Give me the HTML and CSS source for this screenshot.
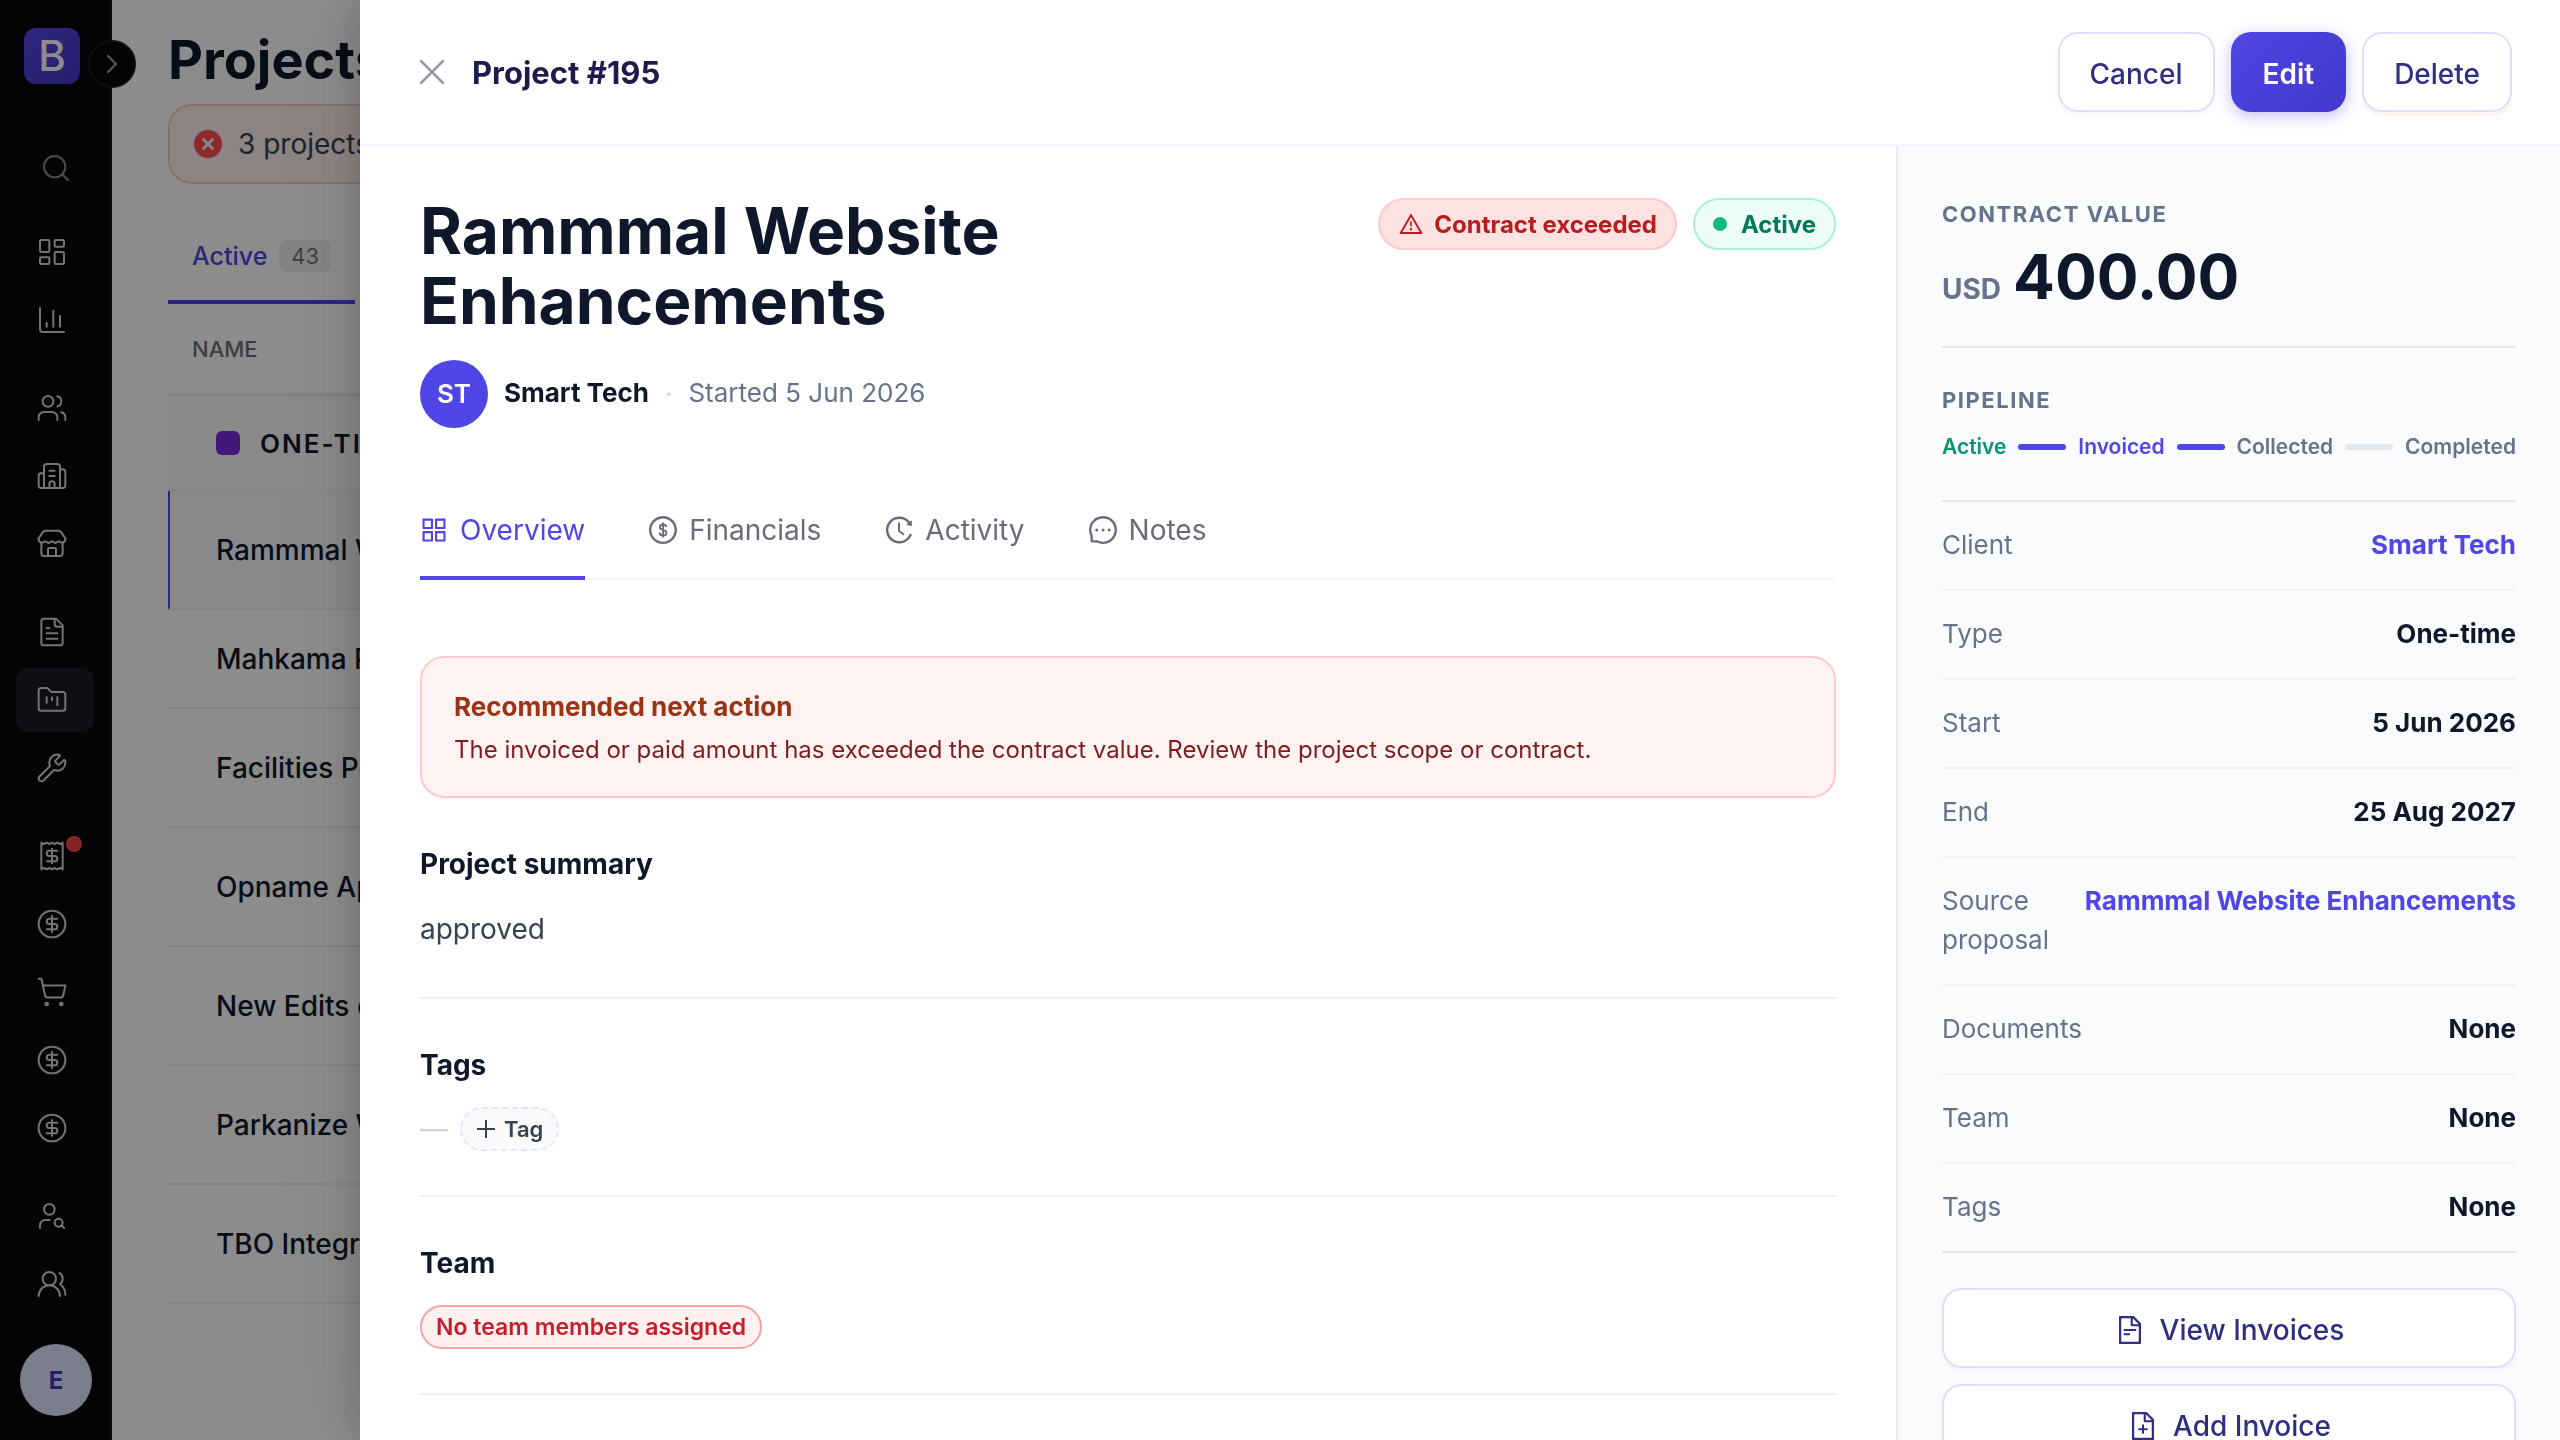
FILE: index.html
```html
<!DOCTYPE html>
<html lang="en">
<head>
    <meta charset="UTF-8">
    <meta name="viewport" content="width=device-width, initial-scale=1.0">
    <title>Project #195</title>
    <link rel="stylesheet" href="styles.css">
</head>
<body>
    <!-- shared icons -->
    <svg class="sprite" aria-hidden="true">
        <symbol id="i-dollar" viewBox="0 0 24 24">
            <circle cx="12" cy="12" r="10"/>
            <path d="M16 8h-6a2 2 0 1 0 0 4h4a2 2 0 1 1 0 4H8M12 18V6"/>
        </symbol>
    </svg>

    <div class="app">
        <aside class="sidebar">
            <a class="logo" href="#">B</a>
            <button class="toggle" aria-label="Expand menu">
                <svg viewBox="0 0 24 24"><path d="m9 18 6-6-6-6"/></svg>
            </button>
            <button class="nav-search" aria-label="Search">
                <svg viewBox="0 0 24 24"><circle cx="11" cy="11" r="8"/><path d="m21 21-4.3-4.3"/></svg>
            </button>
            <nav class="nav">
                <div class="nav-group">
                    <a href="#" aria-label="Dashboard"><svg viewBox="0 0 24 24"><rect x="3" y="3" width="7" height="9" rx="1"/><rect x="14" y="3" width="7" height="5" rx="1"/><rect x="14" y="12" width="7" height="9" rx="1"/><rect x="3" y="16" width="7" height="5" rx="1"/></svg></a>
                    <a href="#" aria-label="Reports"><svg viewBox="0 0 24 24"><path d="M3 3v16a2 2 0 0 0 2 2h16M18 17V9M13 17V5M8 17v-3"/></svg></a>
                </div>
                <div class="nav-group">
                    <a href="#" aria-label="Clients"><svg viewBox="0 0 24 24"><path d="M16 21v-2a4 4 0 0 0-4-4H6a4 4 0 0 0-4 4v2M16 3.128a4 4 0 0 1 0 7.744M22 21v-2a4 4 0 0 0-3-3.87"/><circle cx="9" cy="7" r="4"/></svg></a>
                    <a href="#" aria-label="Companies"><svg viewBox="0 0 24 24"><path d="M10 12h4M10 8h4M14 21v-3a2 2 0 0 0-4 0v3M6 10H4a2 2 0 0 0-2 2v7a2 2 0 0 0 2 2h16a2 2 0 0 0 2-2V9a2 2 0 0 0-2-2h-2M6 21V5a2 2 0 0 1 2-2h8a2 2 0 0 1 2 2v16"/></svg></a>
                    <a href="#" aria-label="Vendors"><svg viewBox="0 0 24 24"><path d="M15 21v-5a1 1 0 0 0-1-1h-4a1 1 0 0 0-1 1v5M17.774 10.31a1.12 1.12 0 0 0-1.549 0 2.5 2.5 0 0 1-3.451 0 1.12 1.12 0 0 0-1.548 0 2.5 2.5 0 0 1-3.452 0 1.12 1.12 0 0 0-1.549 0 2.5 2.5 0 0 1-3.77-3.248l2.889-4.184A2 2 0 0 1 7 2h10a2 2 0 0 1 1.653.873l2.895 4.192a2.5 2.5 0 0 1-3.774 3.244M4 10.95V19a2 2 0 0 0 2 2h12a2 2 0 0 0 2-2v-8.05"/></svg></a>
                </div>
                <div class="nav-group">
                    <a href="#" aria-label="Proposals"><svg viewBox="0 0 24 24"><path d="M15 2H6a2 2 0 0 0-2 2v16a2 2 0 0 0 2 2h12a2 2 0 0 0 2-2V7ZM14 2v4a2 2 0 0 0 2 2h4M10 9H8M16 13H8M16 17H8"/></svg></a>
                    <a href="#" class="active" aria-label="Projects"><svg viewBox="0 0 24 24"><path d="M4 20h16a2 2 0 0 0 2-2V8a2 2 0 0 0-2-2h-7.93a2 2 0 0 1-1.66-.9l-.82-1.2A2 2 0 0 0 7.93 3H4a2 2 0 0 0-2 2v13c0 1.1.9 2 2 2ZM8 10v4M12 10v2M16 10v6"/></svg></a>
                    <a href="#" aria-label="Services"><svg viewBox="0 0 24 24"><path d="M14.7 6.3a1 1 0 0 0 0 1.4l1.6 1.6a1 1 0 0 0 1.4 0l3.106-3.105c.32-.322.863-.22.983.218a6 6 0 0 1-8.259 7.057l-7.91 7.91a1 1 0 0 1-2.999-3l7.91-7.91a6 6 0 0 1 7.057-8.259c.438.12.54.662.219.984z"/></svg></a>
                </div>
                <div class="nav-group">
                    <a href="#" class="has-dot" aria-label="Invoices"><svg viewBox="0 0 24 24"><path d="M4 2v20l2-1 2 1 2-1 2 1 2-1 2 1 2-1 2 1V2l-2 1-2-1-2 1-2-1-2 1-2-1-2 1ZM16 8h-6a2 2 0 1 0 0 4h4a2 2 0 1 1 0 4H8M12 17.500v-11"/></svg></a>
                    <a href="#" aria-label="Payments"><svg><use href="#i-dollar"/></svg></a>
                    <a href="#" aria-label="Purchases"><svg viewBox="0 0 24 24"><circle cx="8" cy="21" r="1"/><circle cx="19" cy="21" r="1"/><path d="M2.050 2.050h2l2.660 12.420a2 2 0 0 0 2 1.580h9.780a2 2 0 0 0 1.950-1.570l1.650-7.430H5.120"/></svg></a>
                    <a href="#" aria-label="Expenses"><svg><use href="#i-dollar"/></svg></a>
                    <a href="#" aria-label="Payroll"><svg><use href="#i-dollar"/></svg></a>
                </div>
                <div class="nav-group">
                    <a href="#" aria-label="Recruiting"><svg viewBox="0 0 24 24"><circle cx="10" cy="7" r="4"/><path d="M10.300 15H7a4 4 0 0 0-4 4v2"/><circle cx="17" cy="17" r="3"/><path d="m21 21-1.900-1.900"/></svg></a>
                    <a href="#" aria-label="Employees"><svg viewBox="0 0 24 24"><path d="M18 21a8 8 0 0 0-16 0"/><circle cx="10" cy="8" r="5"/><path d="M22 20c0-3.370-2-6.500-4-8a5 5 0 0 0-.45-8.300"/></svg></a>
                </div>
            </nav>
            <button class="user">E</button>
        </aside>

        <main class="projects">
            <h1>Projects</h1>
            <div class="banner">
                <svg viewBox="0 0 28 28"><circle cx="14" cy="14" r="14" fill="#ff4d55"/><path d="m9.500 9.500 9 9m0-9-9 9" stroke="#fff" stroke-width="2.500" stroke-linecap="round"/></svg>
                <span>3 projects exceeded their contract value</span>
            </div>
            <div class="list-tabs">
                <button class="list-tab">Active <span class="count">43</span></button>
            </div>
            <table class="list">
                <thead>
                    <tr><th>NAME</th></tr>
                </thead>
                <tbody>
                    <tr class="group"><td><div class="group-name"><span class="swatch"></span>ONE-TIME</div></td></tr>
                    <tr class="selected"><td>Rammmal Website Enhancements</td></tr>
                    <tr class="short"><td>Mahkama Portal</td></tr>
                    <tr><td>Facilities Portal</td></tr>
                    <tr><td>Opname App</td></tr>
                    <tr><td>New Edits on Website</td></tr>
                    <tr><td>Parkanize Website</td></tr>
                    <tr><td>TBO Integration</td></tr>
                </tbody>
            </table>
        </main>
    </div>

    <div class="backdrop"></div>

    <section class="drawer" role="dialog" aria-label="Project #195">
        <header class="drawer-head">
            <button class="close" aria-label="Close">
                <svg viewBox="0 0 24 24"><path d="M1 1l22 22M23 1 1 23"/></svg>
            </button>
            <h2>Project #195</h2>
            <div class="actions">
                <button class="btn">Cancel</button>
                <button class="btn primary">Edit</button>
                <button class="btn danger">Delete</button>
            </div>
        </header>

        <div class="drawer-body">
            <div class="details">
                <div class="title-row">
                    <h1>Rammmal Website Enhancements</h1>
                    <div class="badges">
                        <span class="badge red">
                            <svg viewBox="0 0 1024 1024"><path d="M464 720a48 48 0 1096 0 48 48 0 10-96 0zm16-304v184c0 4.400 3.600 8 8 8h48c4.400 0 8-3.600 8-8V416c0-4.400-3.600-8-8-8h-48c-4.400 0-8 3.600-8 8zm475.700 440l-416-720c-6.200-10.700-16.900-16-27.700-16s-21.600 5.300-27.700 16l-416 720C56 877.400 71.400 904 96 904h832c24.600 0 40-26.600 27.700-48zm-783.500-27.900L512 239.900l339.800 588.200H172.200z"/></svg>
                            Contract exceeded
                        </span>
                        <span class="badge green"><i class="dot"></i>Active</span>
                    </div>
                </div>
                <div class="client-row">
                    <span class="avatar">ST</span>
                    <strong>Smart Tech</strong>
                    <span class="sep">·</span>
                    <span class="started">Started 5 Jun 2026</span>
                </div>

                <div class="tabs" role="tablist">
                    <button class="tab current" role="tab">
                        <svg viewBox="0 0 1024 1024"><path d="M464 144H160c-8.800 0-16 7.200-16 16v304c0 8.800 7.200 16 16 16h304c8.800 0 16-7.200 16-16V160c0-8.800-7.200-16-16-16zm-52 268H212V212h200v200zm452-268H560c-8.800 0-16 7.200-16 16v304c0 8.800 7.200 16 16 16h304c8.800 0 16-7.200 16-16V160c0-8.800-7.200-16-16-16zm-52 268H612V212h200v200zM464 544H160c-8.800 0-16 7.200-16 16v304c0 8.800 7.200 16 16 16h304c8.800 0 16-7.200 16-16V560c0-8.800-7.200-16-16-16zm-52 268H212V612h200v200zm452-268H560c-8.800 0-16 7.200-16 16v304c0 8.800 7.200 16 16 16h304c8.800 0 16-7.200 16-16V560c0-8.800-7.200-16-16-16zm-52 268H612V612h200v200z"/></svg>
                        Overview
                    </button>
                    <button class="tab" role="tab">
                        <svg viewBox="0 0 1024 1024"><path d="M512 64C264.600 64 64 264.600 64 512s200.600 448 448 448 448-200.600 448-448S759.400 64 512 64zm0 820c-205.400 0-372-166.600-372-372s166.600-372 372-372 372 166.600 372 372-166.600 372-372 372z"/><path d="M620 420c-6-54-48-84-106-84-64 0-106 34-106 84 0 116 216 60 216 180 0 54-46 88-110 88-66 0-108-34-114-90M514 272v480" fill="none" stroke="currentColor" stroke-width="58"/></svg>
                        Financials
                    </button>
                    <button class="tab" role="tab">
                        <svg viewBox="0 0 1024 1024"><path d="M536.100 273H488c-4.400 0-8 3.600-8 8v275.300c0 2.600 1.200 5 3.300 6.500l165.300 120.700c3.600 2.600 8.600 1.900 11.200-1.700l28.600-39c2.700-3.700 1.900-8.700-1.700-11.200L544.100 528.500V281c0-4.400-3.600-8-8-8zm219.800 75.200l156.800 38.300c5 1.200 9.900-2.600 9.900-7.700l.8-161.500c0-6.700-7.700-10.500-12.900-6.300L752.900 334.100a8 8 0 003 14.100zm167.700 301.100l-56.700-19.500a8 8 0 00-10.100 4.800c-1.900 5.100-3.900 10.100-6 15.100-17.800 42.100-43.300 80-75.900 112.500a353 353 0 01-112.500 75.900 352.180 352.180 0 01-137.700 27.800c-47.800 0-94.100-9.300-137.700-27.800a353 353 0 01-112.500-75.900c-32.500-32.500-58-70.400-75.900-112.500A353.440 353.440 0 01171 512c0-47.800 9.300-94.200 27.800-137.800 17.800-42.100 43.300-80 75.900-112.500a353 353 0 01112.500-75.900C430.600 167.300 477 158 524.800 158s94.100 9.300 137.700 27.800A353 353 0 01775 261.700c10.200 10.300 19.800 21 28.600 32.300l59.800-46.800C784.700 146.600 662.200 81.900 524.600 82 285 82.100 92.600 276.700 95 516.400 97.400 751.900 288.900 942 524.800 942c185.500 0 343.500-117.600 403.700-282.300 1.500-4.200-.7-8.900-4.900-10.400z"/></svg>
                        Activity
                    </button>
                    <button class="tab" role="tab">
                        <svg viewBox="0 0 1024 1024"><path d="M464 512a48 48 0 1096 0 48 48 0 10-96 0zm200 0a48 48 0 1096 0 48 48 0 10-96 0zm-400 0a48 48 0 1096 0 48 48 0 10-96 0zm661.200-173.600c-22.600-53.700-55-101.900-96.300-143.300a444.350 444.350 0 00-143.300-96.300C630.600 75.700 572.200 64 512 64h-2c-60.600.3-119.300 12.300-174.500 35.900a445.350 445.350 0 00-142 96.500c-40.900 41.300-73 89.300-95.200 142.800-23 55.400-34.600 114.300-34.300 174.900A449.400 449.400 0 00112 714v152a46 46 0 0046 46h152.100A449.400 449.400 0 00510 960h2.100c59.900 0 118-11.600 172.700-34.300a444.480 444.480 0 00142.800-95.200c41.300-40.900 73.800-88.700 96.500-142 23.600-55.200 35.600-113.900 35.900-174.500.3-60.900-11.500-120-34.800-175.600zm-151.100 438C704 845.800 611 884 512 884h-1.700c-60.300-.3-120.200-15.300-173.100-43.500l-8.400-4.500H188V695.200l-4.500-8.400C155.300 633.900 140.300 574 140 513.700c-.4-99.700 37.700-193.300 107.600-263.800 69.800-70.500 163.100-109.500 262.800-109.900h1.700c50 0 98.500 9.700 144.200 28.900 44.600 18.700 84.600 45.600 119 80 34.300 34.300 61.300 74.400 80 119 19.400 46.200 29.100 95.200 28.900 145.800-.6 99.600-39.700 192.900-110.100 262.700z"/></svg>
                        Notes
                    </button>
                </div>

                <div class="next-action">
                    <h3>Recommended next action</h3>
                    <p>The invoiced or paid amount has exceeded the contract value. Review the project scope or contract.</p>
                </div>

                <section class="block">
                    <h3>Project summary</h3>
                    <p>approved</p>
                </section>
                <section class="block">
                    <h3>Tags</h3>
                    <div class="tag-row">
                        <span class="empty">—</span>
                        <button class="add-tag">
                            <svg viewBox="0 0 20 20"><path d="M10 1v18M1 10h18"/></svg>
                            Tag
                        </button>
                    </div>
                </section>
                <section class="block">
                    <h3>Team</h3>
                    <div class="tag-row"><span class="no-team">No team members assigned</span></div>
                </section>
            </div>

            <aside class="facts">
                <div class="value-box">
                    <h4>CONTRACT VALUE</h4>
                    <p class="amount"><span>USD</span> 400.00</p>
                </div>
                <div class="pipeline-box">
                    <h4>PIPELINE</h4>
                    <div class="pipeline">
                        <span class="done">Active</span>
                        <i class="bar on"></i>
                        <span class="now">Invoiced</span>
                        <i class="bar on"></i>
                        <span>Collected</span>
                        <i class="bar"></i>
                        <span>Completed</span>
                    </div>
                </div>
                <dl class="rows">
                    <div><dt>Client</dt><dd><a href="#">Smart Tech</a></dd></div>
                    <div><dt>Type</dt><dd>One-time</dd></div>
                    <div><dt>Start</dt><dd>5 Jun 2026</dd></div>
                    <div><dt>End</dt><dd>25 Aug 2027</dd></div>
                    <div><dt>Source proposal</dt><dd><a href="#">Rammmal Website Enhancements</a></dd></div>
                    <div><dt>Documents</dt><dd>None</dd></div>
                    <div><dt>Team</dt><dd>None</dd></div>
                    <div><dt>Tags</dt><dd>None</dd></div>
                </dl>
                <div class="fact-actions">
                    <button class="btn">
                        <svg viewBox="0 0 1024 1024"><path d="M854.600 288.600L639.400 73.400c-6-6-14.100-9.400-22.600-9.400H192c-17.700 0-32 14.300-32 32v832c0 17.700 14.300 32 32 32h640c17.700 0 32-14.300 32-32V311.300c0-8.500-3.400-16.700-9.400-22.700zM790.200 326H602V137.800L790.200 326zm1.800 562H232V136h302v216a42 42 0 0042 42h216v494zM504 618H320c-4.400 0-8 3.600-8 8v48c0 4.400 3.600 8 8 8h184c4.400 0 8-3.600 8-8v-48c0-4.400-3.600-8-8-8zM312 490v48c0 4.400 3.600 8 8 8h384c4.400 0 8-3.600 8-8v-48c0-4.400-3.600-8-8-8H320c-4.400 0-8 3.600-8 8z"/></svg>
                        View Invoices
                    </button>
                    <button class="btn">
                        <svg viewBox="0 0 1024 1024"><path d="M854.600 288.600L639.400 73.400c-6-6-14.100-9.400-22.600-9.400H192c-17.700 0-32 14.300-32 32v832c0 17.700 14.300 32 32 32h640c17.700 0 32-14.300 32-32V311.300c0-8.500-3.400-16.700-9.400-22.700zM790.200 326H602V137.800L790.200 326zm1.800 562H232V136h302v216a42 42 0 0042 42h216v494zM544 472c0-4.400-3.600-8-8-8h-48c-4.400 0-8 3.600-8 8v108H372c-4.400 0-8 3.600-8 8v48c0 4.400 3.600 8 8 8h108v108c0 4.400 3.600 8 8 8h48c4.400 0 8-3.600 8-8V644h108c4.400 0 8-3.600 8-8v-48c0-4.400-3.600-8-8-8H544V472z"/></svg>
                        Add Invoice
                    </button>
                </div>
            </aside>
        </div>
    </section>
</body>
</html>
```
FILE: styles.css
```css
*{
    margin: 0;
    padding: 0;
    box-sizing: border-box;
}
body{
    font-family: Inter, "Liberation Sans", sans-serif;
    font-size: 26px;
    color: #0f172a;
    background: #fff;
    overflow: hidden;
}
button{
    font: inherit;
    color: inherit;
    background: none;
    border: 0;
    cursor: pointer;
}
a{
    text-decoration: none;
}
.sprite{
    display: none;
}
.app{
    display: flex;
    height: 100vh;
}

/* sidebar */
.sidebar{
    position: relative;
    flex: none;
    display: flex;
    flex-direction: column;
    width: 112px;
    padding: 28px 16px 24px;
    background: #08080c;
    border-right: 2px solid #15151c;
}
.sidebar svg{
    width: 32px;
    height: 32px;
    fill: none;
    stroke: currentColor;
    stroke-width: 1.5;
    stroke-linecap: round;
    stroke-linejoin: round;
}
.logo{
    width: 56px;
    height: 56px;
    margin-left: 8px;
    border-radius: 12px;
    background: linear-gradient(135deg, #5b45e6, #4338ca);
    color: #fff;
    font-size: 42px;
    font-weight: 500;
    line-height: 56px;
    text-align: center;
}
.toggle{
    position: absolute;
    top: 40px;
    right: -26px;
    display: flex;
    align-items: center;
    justify-content: center;
    width: 48px;
    height: 48px;
    border: 2px solid #1c1c22;
    border-radius: 50%;
    background: #08080c;
    color: #a1a1aa;
}
.nav-search{
    align-self: flex-end;
    height: 32px;
    margin: 68px 22px 0 0;
    color: #8a8a94;
}
.nav{
    display: flex;
    flex-direction: column;
    gap: 24px;
    margin-top: 36px;
}
.nav-group{
    display: flex;
    flex-direction: column;
    gap: 4px;
}
.nav a{
    position: relative;
    display: flex;
    align-items: center;
    height: 64px;
    padding-left: 20px;
    border-radius: 12px;
    color: #d4d4d8;
}
.nav a.active{
    background: #1b1a24;
}
.has-dot::after{
    content: "";
    position: absolute;
    top: 12px;
    right: 12px;
    width: 16px;
    height: 16px;
    border-radius: 50%;
    background: #ef4444;
}
.user{
    width: 72px;
    height: 72px;
    margin: auto 0 0 4px;
    border-radius: 50%;
    background: #e0e7ff;
    color: #4338ca;
    font-size: 24px;
    font-weight: 700;
}

/* project list behind the drawer */
.projects{
    flex: 1;
    min-width: 0;
    padding: 24px 56px;
}
.projects h1{
    font-size: 54px;
    line-height: 72px;
    font-weight: 700;
}
.banner{
    display: flex;
    align-items: center;
    gap: 16px;
    height: 80px;
    margin-top: 8px;
    padding: 0 24px;
    border: 2px solid #fecaca;
    border-radius: 24px;
    background: linear-gradient(90deg, #fff1ee, #fef2f2);
    color: #374151;
    font-size: 28px;
}
.banner svg{
    width: 28px;
    height: 28px;
}
.list-tabs{
    display: flex;
    margin-top: 32px;
}
.list-tab{
    display: flex;
    align-items: center;
    gap: 12px;
    height: 88px;
    padding: 0 24px 4px;
    border-bottom: 4px solid #4f46e5;
    border-radius: 4px 4px 0 0;
    color: #4f46e5;
    font-size: 25px;
    font-weight: 500;
}
.count{
    padding: 0 12px;
    border-radius: 8px;
    background: #f1f1f4;
    color: #71717a;
    font-size: 22px;
    font-weight: 400;
    line-height: 32px;
}
.list{
    width: 100%;
    border-collapse: separate;
    border-spacing: 0;
    text-align: left;
}
.list th{
    height: 93px;
    padding: 0 24px;
    border-bottom: 4px solid #ededf0;
    color: #71717a;
    font-size: 22px;
    font-weight: 500;
}
.list td{
    height: 119px;
    padding: 0 48px;
    border-bottom: 2px solid #f1f1f4;
    font-size: 28px;
    font-weight: 500;
}
.list .group td{
    height: 94px;
    background: #fcfcfc;
    font-size: 26px;
    font-weight: 600;
    letter-spacing: 2px;
}
.list .short td{
    height: 99px;
}
.list .selected td{
    background: #fafaff;
    border-left: 2px solid #4f46e5;
    padding-left: 46px;
}
.group-name{
    display: flex;
    align-items: center;
    gap: 20px;
}
.swatch{
    width: 24px;
    height: 24px;
    border-radius: 6px;
    background: #7c2ddb;
}

.backdrop{
    position: fixed;
    inset: 0;
    background: rgba(0, 0, 0, 0.45);
}

/* drawer */
.drawer{
    position: fixed;
    inset: 0 0 0 360px;
    display: flex;
    flex-direction: column;
    background: #fff;
    box-shadow: -12px 0 32px rgba(0, 0, 0, 0.12), -12px 0 96px rgba(0, 0, 0, 0.08);
}
.drawer-head{
    flex: none;
    display: flex;
    align-items: center;
    height: 146px;
    padding: 0 48px 0 60px;
    border-bottom: 2px solid #f3f2fe;
}
.close{
    display: flex;
    margin-right: 28px;
}
.close svg{
    width: 24px;
    height: 24px;
    stroke: #9a9aa8;
    stroke-width: 2.5;
    stroke-linecap: round;
}
.drawer-head h2{
    flex: 1;
    color: #1e1b4b;
    font-size: 31px;
    font-weight: 700;
}
.actions{
    display: flex;
    gap: 16px;
}
.btn{
    display: flex;
    align-items: center;
    justify-content: center;
    gap: 14px;
    height: 80px;
    padding: 4px 30px 0;
    border: 2px solid #e0dffa;
    border-radius: 20px;
    background: #fff;
    box-shadow: 0 4px 4px rgba(79, 70, 229, 0.04);
    color: #312e81;
    font-size: 28px;
    font-weight: 500;
}
.btn svg{
    width: 32px;
    height: 32px;
    fill: currentColor;
}
.btn.primary{
    border-color: transparent;
    background: linear-gradient(135deg, #4f46e5, #4338ca) border-box;
    box-shadow: 0 4px 16px rgba(79, 70, 229, 0.35);
    color: #fff;
    font-weight: 600;
}
.btn.danger{
    box-shadow: 0 4px 0 rgba(255, 38, 5, 0.06);
}
.drawer-body{
    flex: 1;
    min-height: 0;
    display: flex;
}
.details{
    flex: 1;
    min-width: 0;
    padding: 50px 60px 0;
    overflow: hidden;
}
.title-row{
    display: flex;
    justify-content: space-between;
    align-items: flex-start;
}
.title-row h1{
    max-width: 720px;
    font-size: 64px;
    line-height: 70px;
    font-weight: 700;
}
.badges{
    display: flex;
    gap: 16px;
    padding-top: 2px;
}
.badge{
    display: flex;
    align-items: center;
    height: 52px;
    padding: 0 18px;
    border: 2px solid;
    border-radius: 26px;
    font-size: 24px;
    font-weight: 700;
}
.badge.red{
    gap: 10px;
    background: #fee2e2;
    border-color: #fecaca;
    color: #b91c1c;
}
.badge.red svg{
    width: 26px;
    height: 26px;
    fill: currentColor;
}
.badge.green{
    gap: 14px;
    background: #ecfdf5;
    border-color: #a7f3d0;
    color: #047857;
}
.dot{
    width: 14px;
    height: 14px;
    border-radius: 50%;
    background: #10b981;
}
.client-row{
    display: flex;
    align-items: center;
    gap: 16px;
    margin-top: 24px;
    line-height: 32px;
}
.client-row strong,
.started{
    padding-bottom: 3px;
}
.client-row strong{
    font-weight: 700;
}
.avatar{
    width: 68px;
    height: 68px;
    border-radius: 50%;
    background: #4f46e5;
    color: #fff;
    font-weight: 600;
    line-height: 68px;
    text-align: center;
}
.sep{
    color: #cbd5e1;
}
.started{
    color: #64748b;
}
.tabs{
    display: flex;
    gap: 64px;
    height: 100px;
    margin: 52px 0 76px;
    border-bottom: 2px solid #f5f5fd;
}
.tab{
    display: flex;
    align-items: center;
    gap: 10px;
    height: 100px;
    padding-top: 4px;
    border-bottom: 4px solid transparent;
    color: #6b6b7b;
    font-size: 28px;
}
.tab svg{
    width: 32px;
    height: 32px;
    margin-left: -2px;
    fill: currentColor;
}
.tab.current{
    border-color: #4f46e5;
    color: #4f46e5;
}
.next-action{
    padding: 28px 32px 26px;
    border: 2px solid #fecaca;
    border-radius: 24px;
    background: #fef2f2;
    color: #7f1d1d;
    font-size: 24px;
    line-height: 40px;
}
.next-action h3{
    margin-bottom: 2px;
    color: #9a3412;
    font-size: 26px;
    line-height: 42px;
    font-weight: 700;
}
.block{
    padding: 44px 0;
    border-bottom: 2px solid #eef0f2;
    font-size: 28px;
}
.block h3{
    margin-bottom: 20px;
    font-size: 28px;
    line-height: 44px;
    font-weight: 700;
}
.block p{
    color: #374151;
    line-height: 47px;
}
.tag-row{
    display: flex;
    align-items: center;
    gap: 12px;
    height: 44px;
}
.empty{
    color: #d4d4dc;
}
.add-tag{
    display: flex;
    align-items: center;
    gap: 8px;
    height: 44px;
    padding: 0 14px;
    border: 2px dashed #e6e4f8;
    border-radius: 22px;
    background: #fafafa;
    color: #374151;
    font-size: 22px;
    font-weight: 600;
}
.add-tag svg{
    width: 20px;
    height: 20px;
    stroke: currentColor;
    stroke-width: 2;
}
.no-team{
    height: 44px;
    padding: 0 14px;
    border: 2px solid #f5a3a3;
    border-radius: 22px;
    background: #fff1f0;
    color: #c81e2b;
    font-size: 23px;
    line-height: 40px;
    font-weight: 600;
}

/* right column */
.facts{
    flex: none;
    width: 664px;
    padding: 50px 44px 0;
    border-left: 2px solid #e8ebf0;
    background: #fafbfd;
    overflow: hidden;
}
.facts h4{
    color: #64748b;
    font-size: 22px;
    line-height: 36px;
    font-weight: 700;
    letter-spacing: 0.07em;
}
.value-box{
    padding-bottom: 32px;
    border-bottom: 2px solid #e5e7eb;
}
.amount{
    display: flex;
    align-items: baseline;
    gap: 12px;
    margin-top: 8px;
    font-size: 62px;
    line-height: 74px;
    font-weight: 700;
}
.amount span{
    color: #64748b;
    font-size: 28px;
    line-height: 32px;
    font-weight: 700;
}
.pipeline-box{
    padding: 34px 0 37px;
    border-bottom: 2px solid #e5e7eb;
}
.pipeline{
    display: flex;
    align-items: center;
    gap: 12px;
    margin-top: 13px;
    color: #64748b;
    font-size: 21px;
    line-height: 32px;
    font-weight: 600;
}
.pipeline .done{
    color: #059669;
}
.pipeline .now{
    color: #4f46e5;
}
.bar{
    flex: 1;
    height: 6px;
    border-radius: 3px;
    background: #e5e7f0;
}
.bar.on{
    background: #4f46e5;
}
.rows{
    border-bottom: 2px solid #e5e7eb;
    line-height: 39px;
}
.rows div{
    display: flex;
    justify-content: space-between;
    gap: 32px;
    padding: 23px 0 25px;
    border-bottom: 2px solid #f0f2f5;
}
.rows div:last-child{
    border-bottom: 0;
}
.rows dt{
    color: #64748b;
}
.rows dd{
    flex: none;
    font-weight: 700;
}
.rows a{
    color: #4f46e5;
}
.fact-actions{
    display: flex;
    flex-direction: column;
    gap: 16px;
    margin-top: 35px;
}
```
